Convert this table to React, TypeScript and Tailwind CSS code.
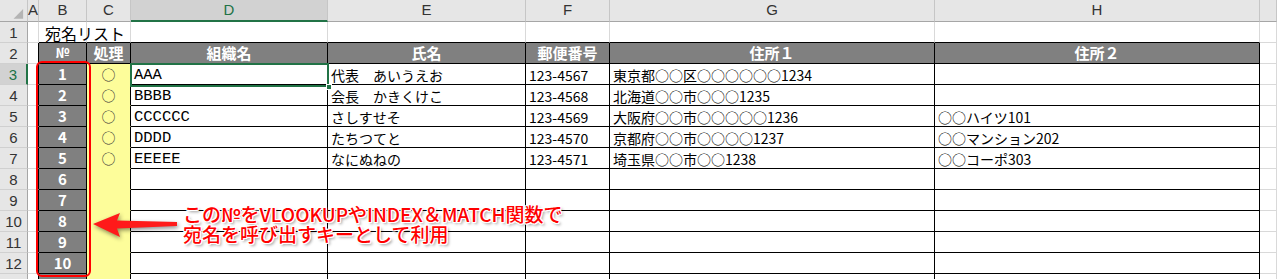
import React from "react";

const jp = "font-['Noto_Sans_CJK_JP','Noto_Sans',sans-serif]";
const colLetters = ["", "A", "B", "C", "D", "E", "F", "G", "H", ""];

const rows = [
  { org: "AAA", name: "代表　あいうえお", zip: "123-4567", addr1: "東京都○○区○○○○○○1234", addr2: "" },
  { org: "BBBB", name: "会長　かきくけこ", zip: "123-4568", addr1: "北海道○○市○○○1235", addr2: "" },
  { org: "CCCCCC", name: "さしすせそ", zip: "123-4569", addr1: "大阪府○○市○○○○○1236", addr2: "○○ハイツ101" },
  { org: "DDDD", name: "たちつてと", zip: "123-4570", addr1: "京都府○○市○○○○1237", addr2: "○○マンション202" },
  { org: "EEEEE", name: "なにぬねの", zip: "123-4571", addr1: "埼玉県○○市○○1238", addr2: "○○コーポ303" },
];

const heads = ["№", "処理", "組織名", "氏名", "郵便番号", "住所１", "住所２"];

function Cell({ r, c }: { r: number; c: number }) {
  // r: 1..13 sheet row, c: 1..9 (A..I)
  const inTable = r >= 2 && c >= 2 && c <= 8;
  const isTitle = r === 1 && c === 2;
  let cls = "border-r border-b flex items-center whitespace-nowrap ";
  cls += isTitle ? "overflow-visible relative z-10 " : "overflow-hidden ";
  let content: React.ReactNode = null;

  if (inTable) {
    cls += "border-r-black ";
    cls += c === 3 && r >= 3 ? "border-b-[#fdfd9a] " : "border-b-black ";
  } else if (c === 1 && r >= 2) {
    cls += "border-r-black border-b-[#d9d9d9] ";
  } else if (r === 1 && c >= 2 && c <= 8) {
    cls += "border-r-[#d9d9d9] border-b-black ";
  } else {
    cls += "border-r-[#d9d9d9] border-b-[#d9d9d9] ";
  }

  if (isTitle) {
    content = <span className={`${jp} text-[16px] text-black pl-[6px] pt-[2px]`}>宛名リスト</span>;
  }

  if (r === 2 && inTable) {
    cls += "bg-[#808080] justify-center ";
    content = (
      <span className={`${jp} font-bold text-white ${c === 2 ? "text-[13px]" : "text-[15px]"}`}>
        {heads[c - 2]}
      </span>
    );
  } else if (c === 2 && r >= 3) {
    cls += "bg-[#808080] justify-center ";
    content = <span className={`${jp} font-bold text-white text-[15px]`}>{r <= 12 ? r - 2 : ""}</span>;
  } else if (c === 3 && r >= 3) {
    cls += "bg-[#fdfd9a] justify-center ";
    if (r <= 7) content = <span className={`${jp} text-[14px] text-[#333] pt-[1px]`}>○</span>;
  } else if (r >= 3 && r <= 7 && inTable) {
    const d = rows[r - 3];
    const text = [d.org, d.name, d.zip, d.addr1, d.addr2][c - 4];
    cls += "bg-white ";
    content =
      c === 4 ? (
        <span className="font-['Liberation_Mono',monospace] text-[15.5px] text-black pl-[3px] pt-[3px]">{text}</span>
      ) : (
        <span className={`${jp} text-[14px] text-black pl-[3px] pt-[2px]`}>{text}</span>
      );
  } else if (!isTitle) {
    cls += "bg-white ";
  }

  return <div className={cls}>{content}</div>;
}

export default function App() {
  const sheetRows = Array.from({ length: 13 }, (_, i) => i + 1);
  return (
    <div className="relative w-[1277px] h-[279px] overflow-hidden bg-white">
      <div className="grid grid-cols-[28px_11px_48px_44px_197px_198px_84px_325px_325px_17px] grid-rows-[22px_repeat(13,21px)]">
        {/* column header */}
        {colLetters.map((l, i) => (
          <div
            key={"h" + i}
            className={`flex items-center justify-center border-r border-r-[#c6c6c6] font-['Liberation_Sans',sans-serif] text-[15px] ${
              i === 4
                ? "bg-[#d2d2d2] text-[#217346] border-b-2 border-b-[#217346]"
                : "bg-[#e6e6e6] text-[#333] border-b border-b-[#a6a6a6]"
            }`}
          >
            {i === 0 ? (
              <svg width="28" height="22" viewBox="0 0 28 22">
                <polygon points="24,9 24,19 14,19" fill="#b4b4b4" />
              </svg>
            ) : (
              l
            )}
          </div>
        ))}
        {sheetRows.map((r) => (
          <React.Fragment key={r}>
            <div
              className={`flex items-center justify-center border-b border-b-[#d0d0d0] font-['Liberation_Sans',sans-serif] text-[15px] pt-[3px] ${
                r === 3
                  ? "bg-[#d2d2d2] text-[#217346] border-r-2 border-r-[#217346]"
                  : "bg-[#e6e6e6] text-[#333] border-r border-r-[#a6a6a6]"
              }`}
            >
              {r <= 12 ? r : ""}
            </div>
            {Array.from({ length: 9 }, (_, j) => (
              <Cell key={j} r={r} c={j + 1} />
            ))}
          </React.Fragment>
        ))}
      </div>

      {/* selected cell D3 */}
      <div className="absolute left-[130px] top-[63px] w-[199px] h-[24px] border-2 border-[#217346] pointer-events-none" />
      <div className="absolute left-[326px] top-[84px] w-[6px] h-[6px] bg-[#217346] border border-white" />

      {/* red highlight around No. column */}
      <div className="absolute left-[36px] top-[61px] w-[55px] h-[216px] border-2 border-[#ff0000] rounded-[6px]" />

      {/* arrow */}
      <svg
        className="absolute left-[90px] top-[208px] drop-shadow-[1px_2px_2px_rgba(0,0,0,0.45)]"
        width="92"
        height="34"
        viewBox="90 208 92 34"
      >
        <path d="M93,224 L120,213 L117,220.5 L177,222 L177,226 L117,228.5 L120,237 Z" fill="#ff1a1a" />
      </svg>

      {/* annotation */}
      <div
        className={`absolute left-[183px] top-[204px] ${jp} font-medium text-[19px] leading-[20px] text-[#ff0000] [text-shadow:1px_0_0_#fff,-1px_0_0_#fff,0_1px_0_#fff,0_-1px_0_#fff,1px_1px_0_#fff,-1px_-1px_0_#fff,1px_-1px_0_#fff,-1px_1px_0_#fff,2px_2px_3px_rgba(0,0,0,0.45)]`}
      >
        <div>この№をVLOOKUPやINDEX＆MATCH関数で</div>
        <div>宛名を呼び出すキーとして利用</div>
      </div>
    </div>
  );
}
